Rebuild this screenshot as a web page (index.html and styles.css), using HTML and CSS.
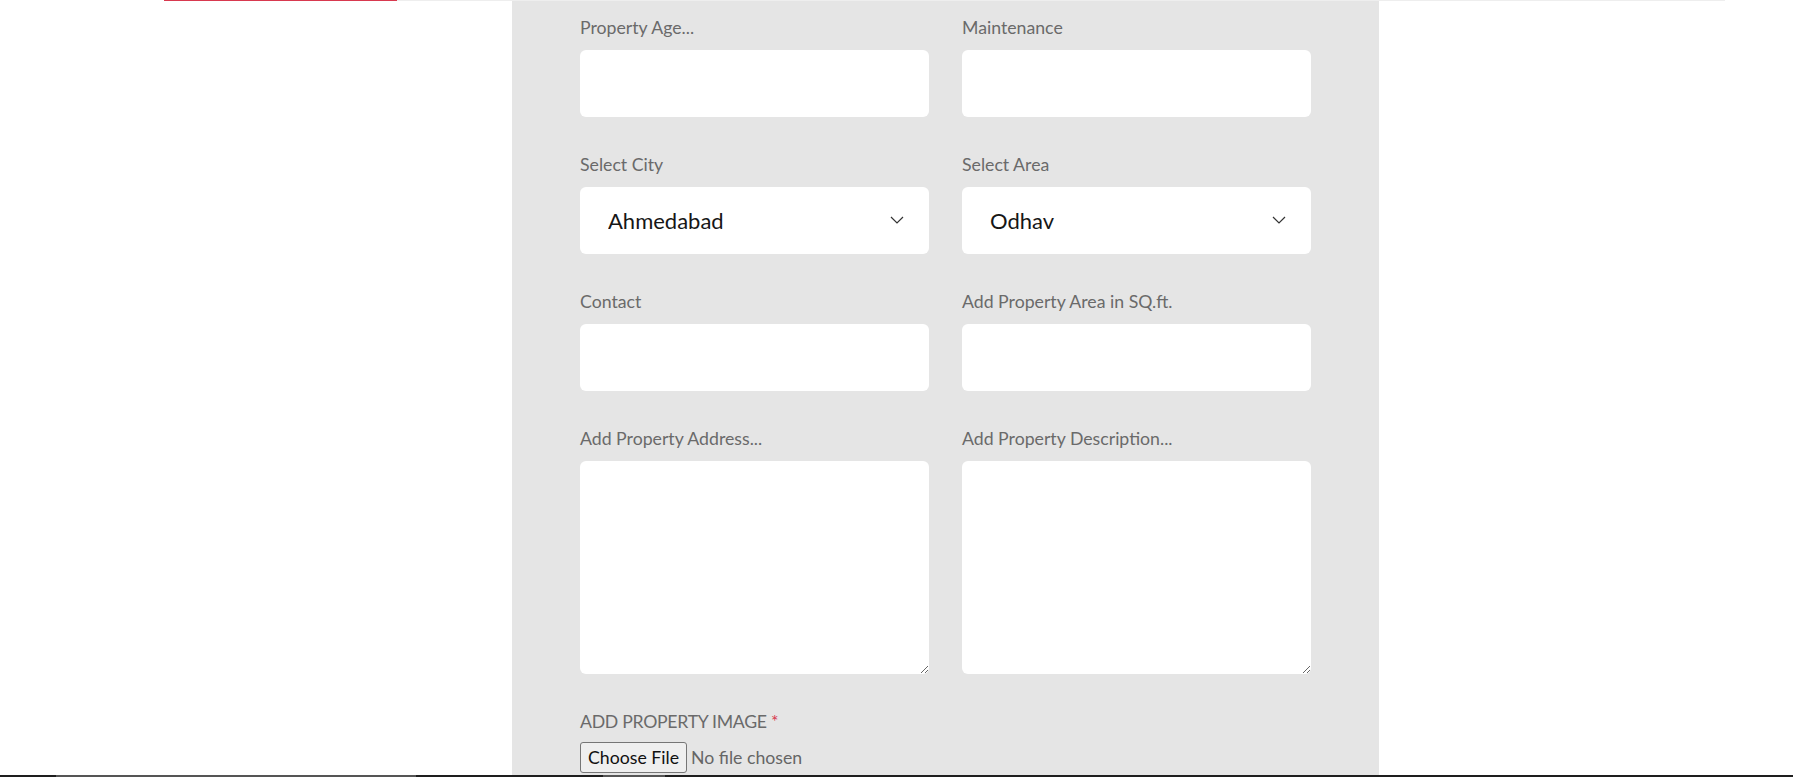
FILE: index.html
```html
<!DOCTYPE html>
<html lang="en">
<head>
<meta charset="utf-8">
<title>Add Property</title>
<link rel="stylesheet" href="styles.css">
</head>
<body>
<div class="topline"><div class="topline-active"></div></div>
<main class="panel">
  <form class="form-grid">
    <div class="field">
      <label class="label">Property Age...</label>
      <input class="input" type="text">
    </div>
    <div class="field">
      <label class="label">Maintenance</label>
      <input class="input" type="text">
    </div>
    <div class="field">
      <label class="label">Select City</label>
      <div class="select-wrap">
        <select class="select"><option>Ahmedabad</option></select>
        <svg class="chevron" width="14" height="8" viewBox="0 0 14 8"><path d="M1 1 L7 7 L13 1" fill="none" stroke="#333" stroke-width="1.2"/></svg>
      </div>
    </div>
    <div class="field">
      <label class="label">Select Area</label>
      <div class="select-wrap">
        <select class="select"><option>Odhav</option></select>
        <svg class="chevron" width="14" height="8" viewBox="0 0 14 8"><path d="M1 1 L7 7 L13 1" fill="none" stroke="#333" stroke-width="1.2"/></svg>
      </div>
    </div>
    <div class="field">
      <label class="label">Contact</label>
      <input class="input" type="text">
    </div>
    <div class="field">
      <label class="label">Add Property Area in SQ.ft.</label>
      <input class="input" type="text">
    </div>
    <div class="field">
      <label class="label">Add Property Address...</label>
      <textarea class="textarea"></textarea>
    </div>
    <div class="field">
      <label class="label">Add Property Description...</label>
      <textarea class="textarea"></textarea>
    </div>
    <div class="field field-full">
      <label class="label label-upper">ADD PROPERTY IMAGE <span class="req">*</span></label>
      <input class="file" type="file">
    </div>
  </form>
</main>
<div class="bottomline"></div>
</body>
</html>
```
FILE: styles.css
```css
html, body {
  margin: 0;
  padding: 0;
  background: #ffffff;
  font-family: "Lato", "Open Sans", sans-serif;
  overflow: hidden;
  height: 777px;
}
.topline {
  margin-left: 164px;
  width: 1561px;
  height: 1px;
  background: #eeeeee;
}
.topline-active {
  width: 233px;
  height: 1px;
  background: #d8394f;
}
.panel {
  margin-left: 512px;
  width: 867px;
  box-sizing: border-box;
  background: #e5e5e5;
  padding: 15px 68px 40px;
  min-height: 800px;
}
.form-grid {
  display: grid;
  grid-template-columns: 349px 349px;
  column-gap: 33px;
  row-gap: 36px;
}
.field {
  display: flex;
  flex-direction: column;
}
.field-full {
  grid-column: 1 / 3;
}
.label {
  font-size: 17.7px;
  line-height: 24px;
  color: #6a6a6a;
  margin-bottom: 10px;
}
.label-upper {
  margin-bottom: 8px;
  letter-spacing: -0.3px;
}
.req {
  color: #d8394f;
}
.input {
  height: 67px;
  border: none;
  border-radius: 6px;
  background: #ffffff;
  box-sizing: border-box;
  padding: 0 28px;
  font-family: inherit;
  font-size: 20px;
}
.select-wrap {
  position: relative;
}
.select {
  -webkit-appearance: none;
  appearance: none;
  width: 100%;
  height: 67px;
  border: none;
  border-radius: 6px;
  background: #ffffff;
  padding: 0 28px;
  font-family: inherit;
  font-size: 22px;
  font-weight: 400;
  color: #161616;
  box-sizing: border-box;
}
.chevron {
  position: absolute;
  right: 25px;
  top: 29px;
}
.textarea {
  height: 213px;
  border: none;
  border-radius: 6px;
  background: #ffffff;
  box-sizing: border-box;
  font-family: inherit;
  font-size: 17px;
  padding: 10px;
}
.file {
  font-family: inherit;
  font-size: 17.7px;
  color: #666666;
}
.file::file-selector-button {
  font-family: inherit;
  font-size: 17.7px;
  color: #111111;
  background: #efefef;
  border: 1px solid #767676;
  border-radius: 3px;
  padding: 4px 7px;
  height: 31px;
  margin-right: 4px;
}
.bottomline {
  position: fixed;
  left: 0;
  right: 0;
  bottom: 0;
  height: 2px;
  background: linear-gradient(to right, #1e1e1e 0, #1e1e1e 56px, #555 56px, #555 416px, #1e1e1e 416px, #1e1e1e 603px, #555 603px, #555 665px, #1e1e1e 665px);
}
```
